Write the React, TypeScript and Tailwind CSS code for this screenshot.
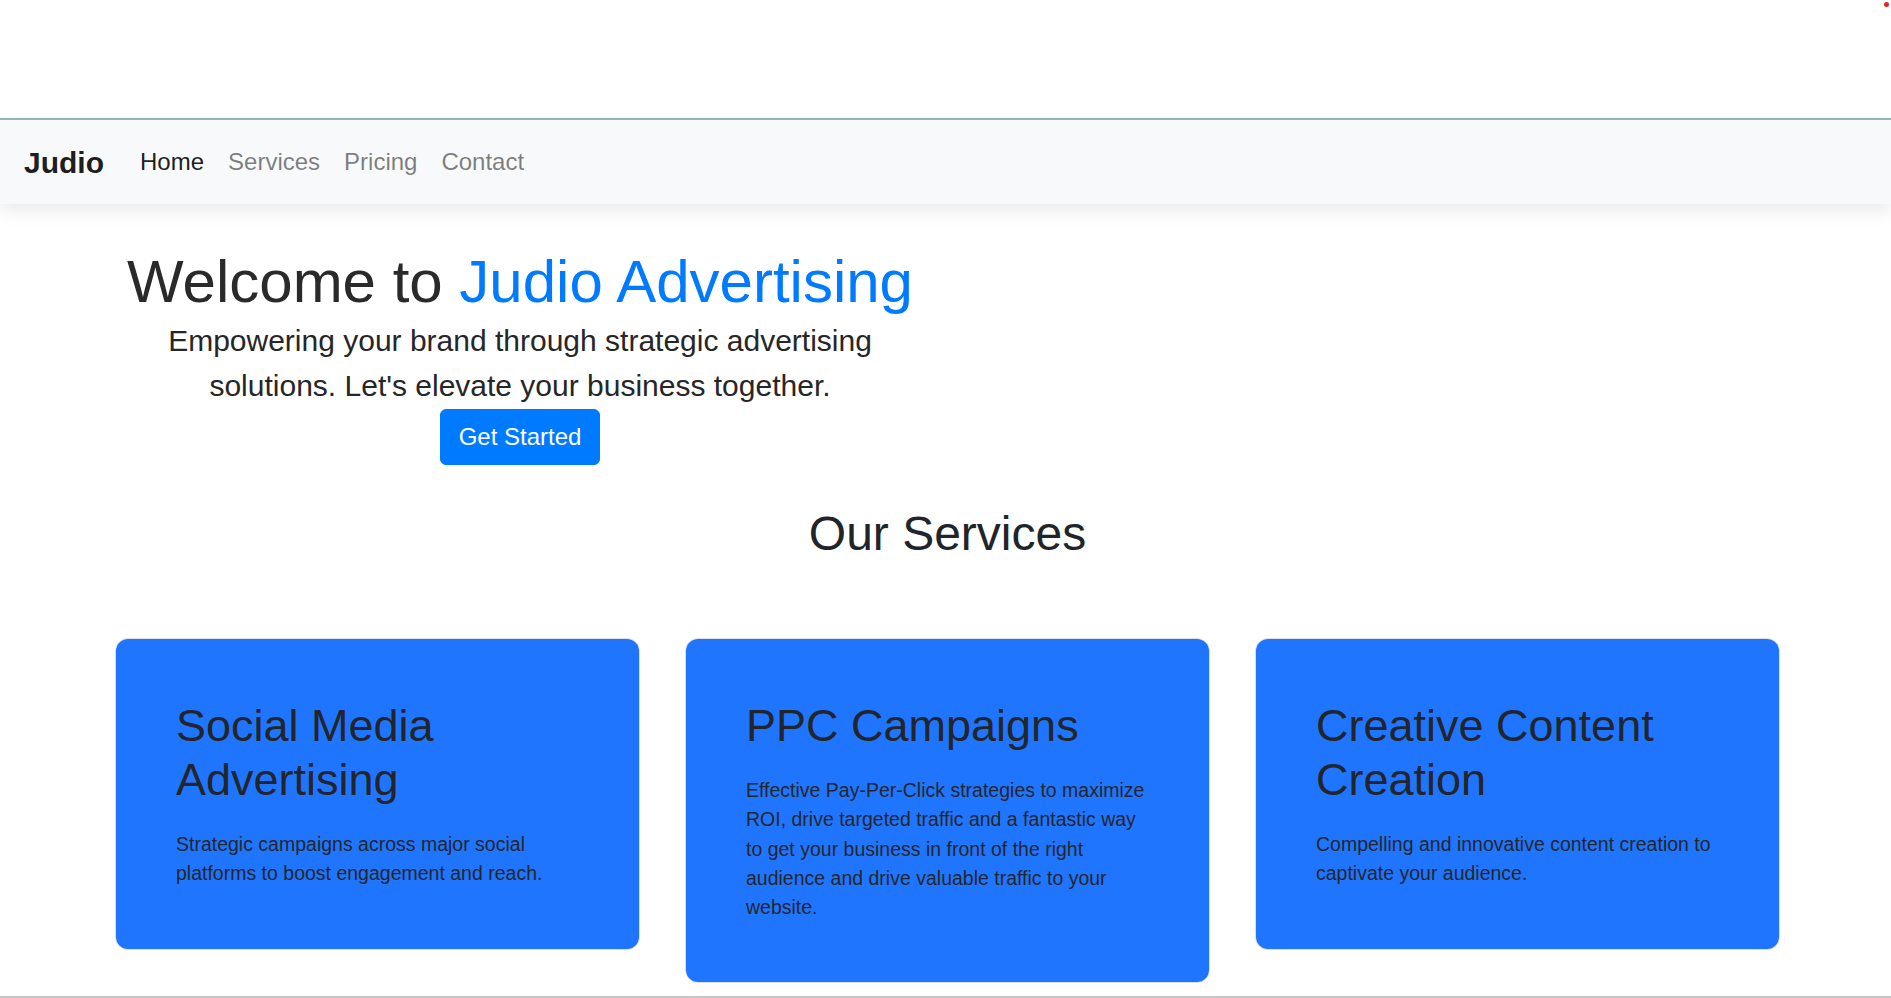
import React from "react";

const NAV_LINKS = [
  { label: "Home", active: true },
  { label: "Services", active: false },
  { label: "Pricing", active: false },
  { label: "Contact", active: false },
];

const SERVICES = [
  {
    title: "Social Media Advertising",
    text: "Strategic campaigns across major social platforms to boost engagement and reach.",
  },
  {
    title: "PPC Campaigns",
    text: "Effective Pay-Per-Click strategies to maximize ROI, drive targeted traffic and a fantastic way to get your business in front of the right audience and drive valuable traffic to your website.",
  },
  {
    title: "Creative Content Creation",
    text: "Compelling and innovative content creation to captivate your audience.",
  },
];

function Navbar() {
  return (
    <nav className="flex h-[86px] items-center border-t-2 border-[#93b5b9] bg-[#f8f9fa] px-[24px] shadow-[0_8px_16px_rgba(0,0,0,0.08)]">
      <a href="#" className="mr-[24px] text-[30px] font-bold leading-[45px] text-black/90">
        Judio
      </a>
      <ul className="flex">
        {NAV_LINKS.map((link) => (
          <li key={link.label}>
            <a
              href="#"
              className={
                link.active
                  ? "block px-[12px] text-[24px] leading-[36px] text-black/90"
                  : "block px-[12px] text-[24px] leading-[36px] text-black/50"
              }
            >
              {link.label}
            </a>
          </li>
        ))}
      </ul>
    </nav>
  );
}

function ServiceCard({ title, text }: { title: string; text: string }) {
  return (
    <div className="rounded-[13px] border border-[#dedede] bg-white">
      <div className="rounded-[12px] bg-[#2075ff] p-[60px]">
        <h3 className="mb-[23px] text-[45px] font-normal leading-[54px] text-[#222529]">
          {title}
        </h3>
        <p className="text-[19.5px] leading-[1.5] text-[#23272b]">{text}</p>
      </div>
    </div>
  );
}

export default function App() {
  return (
    <div className="relative min-h-[998px] bg-white pt-[118px] font-['Liberation_Sans',Arial,sans-serif] text-[#212529]">
      <span className="fixed right-[2px] top-[2px] h-[5px] w-[5px] rounded-full bg-[#e32222]" />

      <Navbar />

      <main className="pl-[4px]">
        <div className="mx-auto w-[1665px]">
          <section className="flex w-[810px] flex-col items-center pt-[42px] text-center">
            <h1 className="text-[60px] font-normal leading-[72px] text-[#2a2a2a]">
              Welcome to <span className="text-[#007bff]">Judio Advertising</span>
            </h1>
            <p className="text-[30px] font-light leading-[45px] text-[#262626]">
              Empowering your brand through strategic advertising solutions. Let's elevate
              your business together.
            </p>
            <a
              href="#"
              className="mt-[1px] rounded-[6px] border border-[#007bff] bg-[#007bff] px-[18px] py-[9px] text-[24px] leading-[36px] text-white"
            >
              Get Started
            </a>
          </section>

          <section className="pt-[40px]">
            <h2 className="text-center text-[48px] font-normal leading-[58px] text-[#212529]">
              Our Services
            </h2>
            <div className="mt-[75px] grid grid-cols-3 items-start gap-[45px]">
              {SERVICES.map((service) => (
                <ServiceCard key={service.title} title={service.title} text={service.text} />
              ))}
            </div>
          </section>
        </div>
      </main>

      <div className="fixed bottom-0 left-0 h-[2px] w-full bg-[#c6c6c6]" />
    </div>
  );
}
